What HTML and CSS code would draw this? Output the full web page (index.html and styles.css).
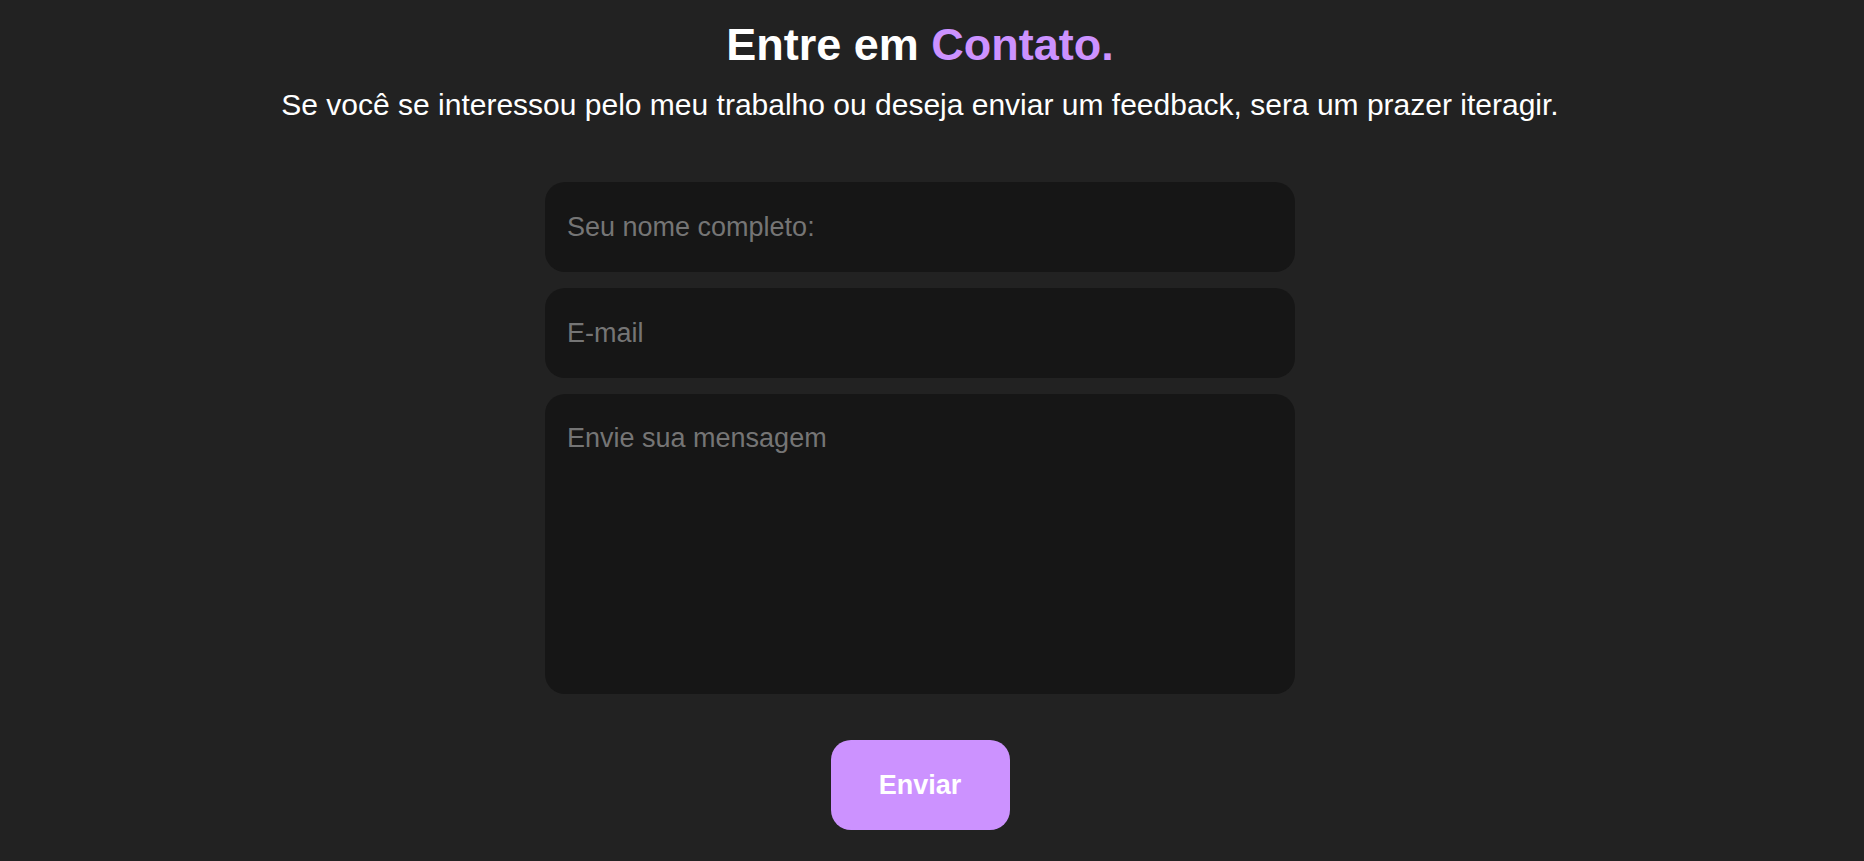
FILE: index.html
```html
<!DOCTYPE html>
<html lang="pt-BR">
<head>
<meta charset="utf-8">
<title>Contato</title>
<link rel="stylesheet" href="styles.css">
</head>
<body>
<section class="contact">
  <header class="contact-head">
    <h1 class="title">Entre em <span class="accent">Contato.</span></h1>
    <p class="subtitle">Se você se interessou pelo meu trabalho ou deseja enviar um feedback, sera um prazer iteragir.</p>
  </header>
  <form class="form">
    <input class="field" type="text" placeholder="Seu nome completo:">
    <input class="field" type="email" placeholder="E-mail">
    <textarea class="field area" placeholder="Envie sua mensagem"></textarea>
    <button class="send" type="button">Enviar</button>
  </form>
</section>
</body>
</html>
```
FILE: styles.css
```css
html, body {
  margin: 0;
  padding: 0;
  background: #222222;
  height: 100%;
}
body {
  font-family: "Liberation Sans", Arial, sans-serif;
  color: #ffffff;
  overflow: hidden;
}
.contact {
  display: flex;
  flex-direction: column;
  align-items: center;
  padding-top: 19px;
  padding-right: 24px;
}
.contact-head {
  display: flex;
  flex-direction: column;
  align-items: center;
  gap: 18px;
}
.title {
  margin: 0;
  font-size: 45px;
  line-height: 51px;
  font-weight: 700;
}
.accent {
  color: #cc92ff;
}
.subtitle {
  margin: 0;
  font-size: 30px;
  line-height: 34px;
}
.form {
  margin-top: 60px;
  display: flex;
  flex-direction: column;
  align-items: center;
  gap: 16px;
}
.field {
  box-sizing: border-box;
  width: 750px;
  height: 90px;
  border: none;
  outline: none;
  border-radius: 20px;
  background: #161616;
  color: #ffffff;
  font-family: "Liberation Sans", Arial, sans-serif;
  font-size: 27px;
  padding: 0 22px;
}
.field::placeholder {
  color: #757575;
}
.area {
  height: 300px;
  padding: 29px 22px;
  resize: none;
  line-height: 31px;
}
.send {
  margin-top: 30px;
  width: 179px;
  height: 90px;
  border: none;
  border-radius: 20px;
  background: #cc92ff;
  color: #ffffff;
  font-family: "Liberation Sans", Arial, sans-serif;
  font-size: 27px;
  font-weight: 700;
  cursor: pointer;
}
```
